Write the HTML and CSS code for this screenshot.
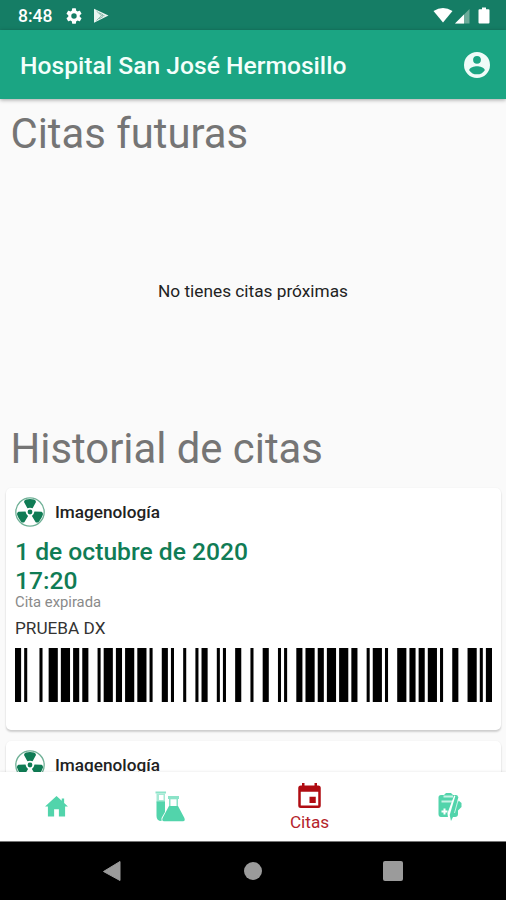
FILE: index.html
```html
<!DOCTYPE html>
<html lang="es">
<head>
<meta charset="utf-8">
<title>Citas</title>
<link rel="stylesheet" href="styles.css">
</head>
<body>
<svg class="defs" width="0" height="0" aria-hidden="true">
  <symbol id="radiation" viewBox="0 0 30 30">
    <circle cx="15" cy="15" r="14.2" fill="#fff" stroke="#6fb096" stroke-width="1.3"/>
    <g fill="#107c55">
      <circle cx="15" cy="15" r="2.4"/>
      <path id="blade" d="M12.400 11.300 9 5Q9 3 11 2.400Q15 1.600 19 2.400Q21 3 21 5L17.600 11.300Q15 10.300 12.400 11.300Z"/>
      <use href="#blade" transform="rotate(120 15 15)"/>
      <use href="#blade" transform="rotate(240 15 15)"/>
    </g>
  </symbol>
</svg>
<div class="screen">
  <div class="status">
    <span class="clock">8:48</span>
    <svg class="gear" viewBox="2 2 20 20"><path fill="#fff" d="M19.14 12.94c.04-.3.06-.61.06-.94s-.02-.64-.07-.94l2.03-1.58a.49.49 0 0 0 .12-.61l-1.92-3.32a.49.49 0 0 0-.59-.22l-2.39.96a7 7 0 0 0-1.62-.94l-.36-2.54A.48.48 0 0 0 13.920 2.400h-3.84a.48.48 0 0 0-.47.41l-.36 2.54c-.59.24-1.13.57-1.62.94l-2.39-.96a.48.48 0 0 0-.59.22L2.740 8.870a.48.48 0 0 0 .12.61l2.03 1.58a6 6 0 0 0 0 1.88l-2.03 1.58a.49.49 0 0 0-.12.61l1.920 3.320c.12.22.37.29.59.22l2.390-.96c.5.380 1.030.7 1.620.940l.36 2.540c.05.24.24.41.48.41h3.840c.24 0 .44-.17.47-.41l.36-2.540a7 7 0 0 0 1.620-.94l2.390.96c.22.08.47 0 .59-.22l1.920-3.320a.48.48 0 0 0-.12-.61zM12 15.400a3.400 3.400 0 1 1 0-6.800 3.400 3.400 0 0 1 0 6.800z"/></svg>
    <svg class="play" viewBox="0 0 16 16"><path fill="#e9f5f1" d="M1 .8 15.500 7.500 1 14.800Z"/><path d="M3.500 3 8.500 7.700 3.500 12.500M8.500 7.700h3M6 4.800l4 2M6 11l4-2.500" fill="none" stroke="#70aa99" stroke-width=".8"/></svg>
    <svg class="signals" viewBox="0 0 58 18">
      <path fill="#fff" d="M.5 4Q10-2 19.500 4L10 15.500Z"/>
      <path fill="#6dab9a" d="M22 16.500 36.500 2V16.500Z"/><path fill="#fff" d="M22 16.500 31 7.500V16.500Z"/>
      <path fill="#fff" d="M49 .5h4v1.800h2.500q1 0 1 1V15.500q0 1-1 1h-9q-1 0-1-1V3.300q0-1 1-1H49Z"/>
    </svg>
  </div>
  <header class="appbar">
    <h1>Hospital San José Hermosillo</h1>
    <svg class="account" viewBox="2 2 20 20"><path fill="#effbf8" d="M12 2a10 10 0 1 0 0 20 10 10 0 0 0 0-20zm0 3a3 3 0 1 1 0 6 3 3 0 0 1 0-6zm0 14.200a7.200 7.200 0 0 1-6-3.220c.03-1.990 4-3.080 6-3.080s5.970 1.090 6 3.080a7.200 7.200 0 0 1-6 3.220z"/></svg>
  </header>
  <main class="content">
    <h2>Citas futuras</h2>
    <p class="empty">No tienes citas próximas</p>
    <h2>Historial de citas</h2>
    <article class="card">
      <div class="kind"><svg><use href="#radiation"/></svg><span>Imagenología</span></div>
      <div class="date">1 de octubre de 2020<br>17:20</div>
      <div class="state">Cita expirada</div>
      <div class="study">PRUEBA DX</div>
      <svg class="barcode" id="barcode" viewBox="0 0 156 54" preserveAspectRatio="none"></svg>
    </article>
    <article class="card">
      <div class="kind"><svg><use href="#radiation"/></svg><span>Imagenología</span></div>
    </article>
  </main>
  <nav class="tabs">
    <a class="tab"><svg class="home" viewBox="0 0 24 22"><path fill="#52d4ab" d="M12 0 0 11h3v10.500h6.500V14h5v7.500H21V11h3L20 7.300V2.500h-2.500V5Z"/></svg></a>
    <a class="tab"><svg class="lab" viewBox="0 0 30 31">
      <path fill="#8be3c8" d="M.5.5h10.500v2H.5Z"/>
      <path fill="#a5e9d4" d="M1.500 2.500h8.500v9h-8.500Z"/><path fill="#fff" d="M4 4h4.500v5H4Z"/>
      <path fill="#52d4ab" d="M1.500 10.500H10V21L6.500 27v3Q1.500 30 1.500 25Z"/>
      <path fill="#8be3c8" d="M13 5h11v3h-1v8h-9V8h-1Z"/><path fill="#fff" d="M15.500 8.300h6v6.700h-6Z"/>
      <path fill="#52d4ab" d="M14 15h9l6.400 12q1.100 3.300-1.600 3.300H9.200q-2.700 0-1.600-3.300Z"/>
    </svg></a>
    <a class="tab active"><svg class="calendar" viewBox="3 1 18 20"><path fill="#b00c12" d="M17 12h-5v5h5zM16 1v2H8V1H6v2H5a2 2 0 0 0-2 2v14a2 2 0 0 0 2 2h14a2 2 0 0 0 2-2V5a2 2 0 0 0-2-2h-1V1zm3 18H5V8h14z"/></svg><span>Citas</span></a>
    <a class="tab"><svg class="notes" viewBox="0 0 24 29">
      <path fill="#52d4ab" d="M3 3h3l2-2h5l2 2h3q2 0 2 2v17q0 3-3 3H3q-2.500 0-2.500-3V5.500Q.5 3 3 3Z"/>
      <path d="M5.500 4.500h9.500M3.500 9.500h12" stroke="#c7f2e5" stroke-width="1.800"/>
      <path d="M6.500 16.500v6M3.500 19.500h6" stroke="#fff" stroke-width="2"/>
      <path d="m18.500 4.500-6.500 17 .8 6" fill="none" stroke="#fff" stroke-width="5"/>
      <path fill="#52d4ab" d="m20.500 8.500 3 2.500v4L20 18.500l-2.500 1Z"/>
      <path fill="#52d4ab" d="m17.500 3.500 3 1.500-4.500 18-3 6-1.300-6Z"/>
      <path d="M20.800 5.500 16.500 21" stroke="#fff" stroke-width=".7"/>
    </svg></a>
  </nav>
  <footer class="system">
    <svg class="back" viewBox="0 0 18 20"><path fill="#9b9b9b" d="M17 .5V19.500L.5 10.500Z" stroke="#9b9b9b" stroke-linejoin="round"/></svg>
    <i class="round"></i>
    <i class="square"></i>
  </footer>
</div>
<script src="barcode.js"></script>
</body>
</html>
```
FILE: styles.css
```css
* { box-sizing: border-box; }
body { margin: 0; font-family: Roboto, sans-serif; background: #fafafa; }
h1, h2, p { margin: 0; font-weight: 400; }
svg { display: block; flex: none; }
.defs { position: absolute; }
.screen { width: 506px; height: 900px; display: flex; flex-direction: column; overflow: hidden; }

.status { height: 30px; flex: none; display: flex; align-items: center; padding: 1px 15px 0 18px; background: #157d65; color: #fff; }
.clock { font-size: 17.5px; font-weight: 500; width: 48px; }
.gear { width: 16px; height: 16px; }
.play { width: 16px; height: 16px; margin-left: 11px; }
.signals { width: 58px; height: 18px; margin-left: auto; }

.appbar { height: 69px; flex: none; display: flex; align-items: center; justify-content: space-between; padding: 1px 16px 0 20px; background: #1ba583; box-shadow: 0 1px 4px rgba(0,0,0,.35); z-index: 1; }
.appbar h1 { font-size: 24.66px; font-weight: 500; color: #f3fffb; white-space: nowrap; }
.account { width: 26px; height: 26px; }

.content { flex: 1; min-height: 0; overflow: hidden; padding: 10px 5px 0 6px; }
h2 { font-size: 41.8px; line-height: 49px; color: #757575; padding-left: 4.5px; white-space: nowrap; }
.empty { height: 266px; display: flex; align-items: center; justify-content: center; padding-right: 1px; font-size: 17.25px; color: #222; }
.card { height: 242px; margin-bottom: 11px; padding: 8px 9px 0; background: #fff; border-radius: 5px; box-shadow: 0 2px 2px rgba(0,0,0,.17), 0 0 2px rgba(0,0,0,.06); }
h2 + .card { margin-top: 15px; }
.kind { display: flex; align-items: center; gap: 10px; height: 31px; font-size: 17.2px; font-weight: 500; color: #222; }
.kind svg { width: 30px; height: 30px; }
.date { margin-top: 11px; font-size: 24.65px; line-height: 28.5px; font-weight: 500; color: #107c55; }
.state { margin-top: -1px; font-size: 14.8px; line-height: 16px; color: #8a8a8a; }
.study { margin-top: 8px; font-size: 17.2px; line-height: 20px; color: #333; }
.barcode { width: 477px; height: 54px; margin-top: 9.5px; }

.tabs { height: 69px; flex: none; display: grid; grid-template-columns: 113px 113px 167px 113px; background: #fff; z-index: 1; box-shadow: 0 -1px 2px rgba(0,0,0,.06); }
.tab { display: flex; flex-direction: column; align-items: center; justify-content: center; font-size: 17.2px; }
.active { color: #b4232b; justify-content: flex-start; padding-top: 11px; }
.active span { line-height: 20px; margin-top: 4px; }
.home { width: 23px; height: 21px; }
.lab { width: 30px; height: 31px; }
.calendar { width: 23px; height: 25px; }
.notes { width: 24px; height: 29px; margin-top: -1px; }

.system { height: 59px; flex: none; display: flex; align-items: center; padding-left: 103px; background: #000; border-top: 1px solid #777; }
.back { width: 18px; height: 20px; }
.round { width: 18px; height: 18px; margin-left: 123px; border-radius: 50%; background: #9b9b9b; }
.square { width: 20px; height: 20px; margin-left: 121px; border-radius: 2px; background: #9b9b9b; }
```
FILE: barcode.js
```js
// Alternating bar and space widths, in modules.
const widths = "211412" + "313121" + "231131" + "213131" + "132113" + "131123" +
  "111323" + "132311" + "132131" + "213131" + "231131" + "133121" + "213113" + "2331112";
const svg = document.getElementById("barcode");
let x = 0;
[...widths].forEach((w, i) => {
  if (i % 2 === 0) {
    const bar = document.createElementNS("http://www.w3.org/2000/svg", "rect");
    bar.setAttribute("x", x);
    bar.setAttribute("width", w);
    bar.setAttribute("height", 54);
    svg.appendChild(bar);
  }
  x += Number(w);
});
```
